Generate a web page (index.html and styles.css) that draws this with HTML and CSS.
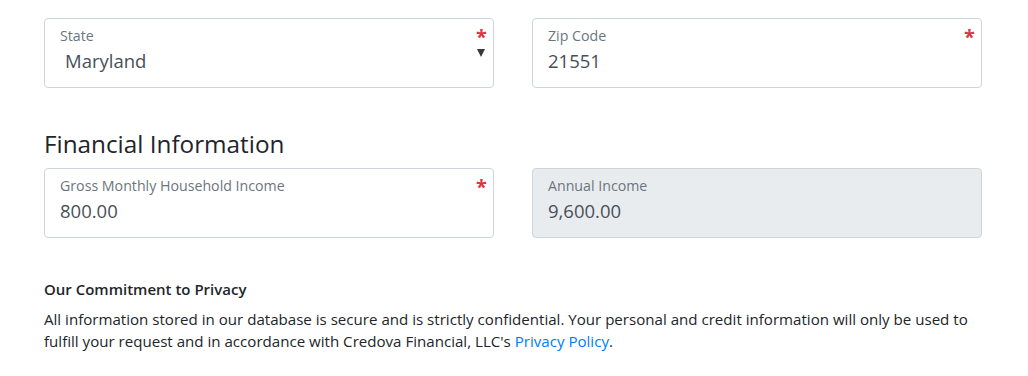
FILE: index.html
```html
<!DOCTYPE html>
<html>
<head>
<meta charset="utf-8">
<link rel="stylesheet" href="styles.css">
</head>
<body>
<div class="page">
  <div class="row">
    <div class="field">
      <div class="label">State</div>
      <div class="value select">Maryland</div>
      <span class="req">*</span>
      <span class="caret"></span>
    </div>
    <div class="field">
      <div class="label">Zip Code</div>
      <div class="value">21551</div>
      <span class="req">*</span>
    </div>
  </div>
  <h2 class="heading">Financial Information</h2>
  <div class="row">
    <div class="field">
      <div class="label">Gross Monthly Household Income</div>
      <div class="value">800.00</div>
      <span class="req">*</span>
    </div>
    <div class="field disabled">
      <div class="label">Annual Income</div>
      <div class="value">9,600.00</div>
    </div>
  </div>
  <div class="privacy">
    <h3 class="privacy-title">Our Commitment to Privacy</h3>
    <p class="privacy-text">All information stored in our database is secure and is strictly confidential. Your personal and credit information will only be used to fulfill your request and in accordance with Credova Financial, LLC's <a href="#" class="link">Privacy Policy</a>.</p>
  </div>
</div>
</body>
</html>
```
FILE: styles.css
```css
* { box-sizing: border-box; }
html, body { margin: 0; padding: 0; background: #fff; }
body {
  font-family: "Open Sans", "Noto Sans", sans-serif;
  color: #212529;
}
.page {
  padding: 18px 46px 0 44px;
  width: 1028px;
}
.row {
  display: grid;
  grid-template-columns: 450px 450px;
  column-gap: 38px;
}
.field {
  position: relative;
  height: 70px;
  border: 1px solid #ced4da;
  border-radius: 4px;
  padding: 8px 15px 0 15px;
  background: #fff;
}
.field.disabled { background: #e9ecef; }
.label {
  font-size: 14.2px;
  line-height: 18px;
  color: #6c757d;
}
.value {
  font-size: 18.5px;
  line-height: 30px;
  color: #495057;
  margin-top: 1px;
}
.value.select { padding-left: 5px; }
.req {
  position: absolute;
  right: 6px;
  top: 8px;
  color: #dc3545;
  font-size: 20px;
  font-weight: 700;
  line-height: 20px;
}
.caret {
  position: absolute;
  right: 8px;
  top: 30px;
  width: 0;
  height: 0;
  border-left: 4px solid transparent;
  border-right: 4px solid transparent;
  border-top: 8px solid #343a40;
}
.heading {
  margin: 41px 0 9px 0;
  font-size: 24.3px;
  line-height: 30px;
  font-weight: 500;
  color: #212529;
}
.privacy { margin-top: 40px; }
.privacy-title {
  margin: 0 0 8px 0;
  font-size: 15px;
  line-height: 22px;
  font-weight: 600;
}
.privacy-text {
  margin: 0;
  font-size: 15.1px;
  line-height: 22px;
  color: #212529;
}
.link { color: #007bff; text-decoration: none; }
```
